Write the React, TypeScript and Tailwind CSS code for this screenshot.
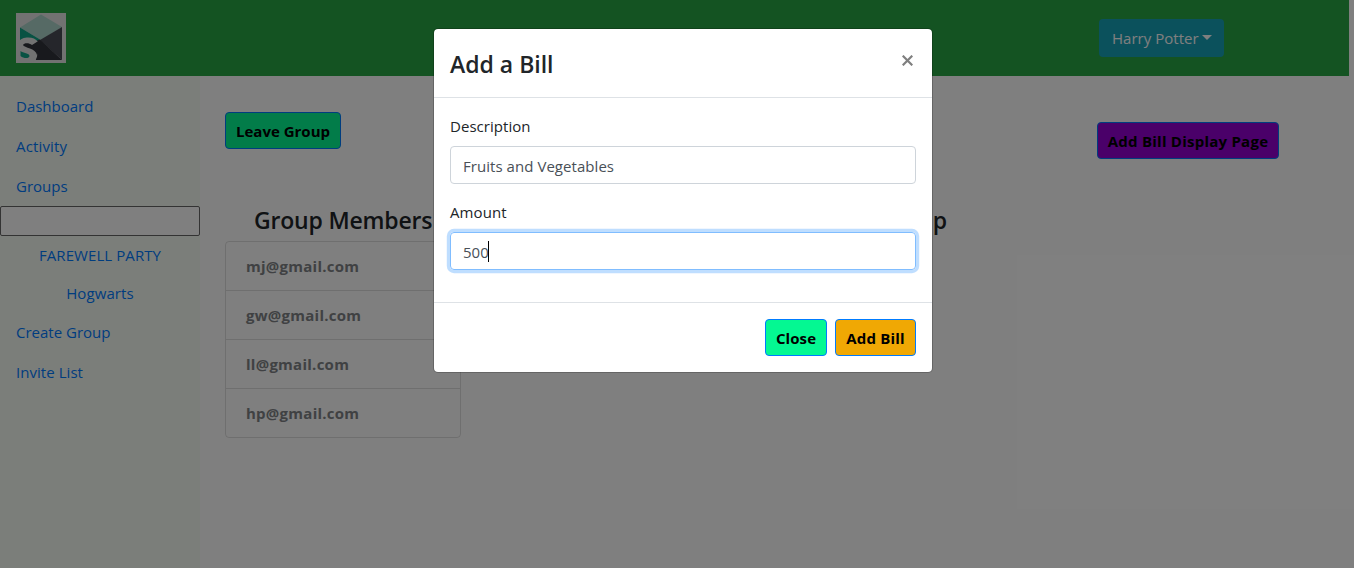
import React from 'react';

const members = ['mj@gmail.com', 'gw@gmail.com', 'll@gmail.com', 'hp@gmail.com'];

function Logo() {
  return (
    <svg width="50" height="50" viewBox="0 0 50 50" className="block">
      <rect width="50" height="50" fill="#e4e4e4" />
      <path d="M4 14.500 25 1.500 46 14 25 27Z" fill="#acd4ca" />
      <path d="M4 14.500 24 26.500 17 31 4 27Z" fill="#10a587" />
      <path d="M46 14V47L24 27Z" fill="#4a4c56" />
      <path d="M24 26.500 46 47H20L15 30Z" fill="#30323a" />
      <path d="M19 31C16 27 5.500 27 5.500 32.500C5.500 38 17.500 35.500 17.500 41.500C17.500 48 7 48 2 44" fill="none" stroke="#e4e4e4" strokeWidth="7.500" />
      <path d="M7 32C8 29.500 13 29.500 16 32L24 27V36L21 42C20 35 8 35 7 32Z" fill="#30323a" />
      <path d="M4.500 38C7 40 13.500 40 13.500 43C13.500 45.500 8 46 4.500 43Z" fill="#10a587" />
    </svg>
  );
}

function Navbar() {
  return (
    <header className="flex h-[76px] w-[1349px] items-center justify-between bg-[#28a745] pl-4 pr-[125px]">
      <Logo />
      <button className="flex h-[38px] w-[125px] items-center rounded bg-[#17a2b8] pb-px pl-[13px] text-white">
        <span className="tracking-[0.02px]">Harry Potter</span>
        <span className="mb-px ml-[3px] border-x-[5px] border-t-[5px] border-x-transparent border-t-white" />
      </button>
    </header>
  );
}

function Sidebar() {
  return (
    <nav className="flex w-[200px] flex-col bg-[#f7fcf4] pt-2.5 text-[#007bff]">
      <a className="h-10 px-4 pt-2">Dashboard</a>
      <a className="h-10 px-4 pt-2 tracking-[0.15px]">Activity</a>
      <a className="h-10 px-4 pt-2">Groups</a>
      <input className="h-[30px] w-[200px] rounded-[2px] border border-[#666] bg-white" />
      <a className="h-[38px] pt-[7px] text-center tracking-[0.08px]">FAREWELL PARTY</a>
      <a className="h-[38px] pt-[7px] text-center tracking-[0.1px]">Hogwarts</a>
      <a className="h-10 px-4 pt-2">Create Group</a>
      <a className="h-10 px-4 pt-2 tracking-[0.05px]">Invite List</a>
    </nav>
  );
}

function GroupPage() {
  return (
    <main className="flex-1 pl-[25px] pt-9">
      <div className="flex justify-between pr-[75px]">
        <button className="h-[37px] w-[116px] rounded border border-[#007bff] bg-[#04f892] pt-px font-bold text-black">Leave Group</button>
        <button className="mt-2.5 h-[37px] w-[182px] rounded border border-[#007bff] bg-[#9400d3] pt-px font-bold tracking-[0.24px] text-black">Add Bill Display Page</button>
      </div>
      <div className="mt-[42px] flex">
        <section className="w-[236px]">
          <h4 className="h-10 whitespace-nowrap pl-[29px] text-[23px] font-semibold leading-[38px] tracking-[-0.18px] text-[#212529]">Group Members</h4>
          <ul className="rounded border border-black/[0.125]">
            {members.map((email) => (
              <li key={email} className="h-[49px] border-b border-black/[0.125] pl-5 pt-3 font-bold tracking-[0.26px] text-[#808386] last:h-12 last:border-b-0">
                {email}
              </li>
            ))}
          </ul>
        </section>
        <h4 className="w-[486px] text-right text-[23px] font-semibold leading-[38px] text-[#212529]">Bills in Group</h4>
      </div>
    </main>
  );
}

function BillModal() {
  return (
    <div role="dialog" className="h-[345px] w-[500px] rounded-[5px] border border-black/20 bg-white bg-clip-padding text-[#212529]">
      <div className="flex h-[69px] justify-between border-b border-[#dee2e6] px-4 pt-[17px]">
        <h4 className="text-[23px] font-semibold leading-9">Add a Bill</h4>
        <svg width="11" height="11" viewBox="0 0 11 11" className="mr-[3px] mt-[9px]">
          <path d="M.7.7 10.300 10.300M10.300.7.7 10.300" stroke="#7f7f7f" strokeWidth="2.200" />
        </svg>
      </div>
      <div className="h-[204px] px-4 pt-4">
        <label className="block h-8 tracking-[0.04px]">Description</label>
        <div className="mb-4 flex h-[38px] items-center rounded border border-[#ced4da] pl-3 pt-px tracking-[0.05px] text-[#495057]">Fruits and Vegetables</div>
        <label className="block h-8 tracking-[0.1px]">Amount</label>
        <div className="flex h-[38px] items-center rounded border border-[#80bdff] pl-3 text-[#495057] shadow-[0_0_0_3.2px_rgba(0,123,255,0.25)]">
          <span className="pt-px">500</span>
          <span className="-ml-px h-[21px] w-px bg-black" />
        </div>
      </div>
      <div className="flex h-[70px] justify-end gap-2 border-t border-[#dee2e6] px-4 pt-4">
        <button className="h-[37px] w-[62px] rounded border border-[#007bff] bg-[#04f892] pt-px font-bold tracking-[0.1px] text-black">Close</button>
        <button className="h-[37px] w-[81px] rounded border border-[#007bff] bg-[#f0a804] pt-px font-bold tracking-[0.2px] text-black">Add Bill</button>
      </div>
    </div>
  );
}

export default function App() {
  return (
    <div className="relative h-[571px] w-[1354px] overflow-hidden bg-white font-['Open_Sans','Noto_Sans',sans-serif] text-[15px] leading-6">
      <div className="flex h-[568px] flex-col">
        <Navbar />
        <div className="flex flex-1">
          <Sidebar />
          <GroupPage />
        </div>
      </div>
      <div className="absolute left-0 top-0 flex h-[568px] w-full items-start bg-black/50 pl-[433px] pt-7">
        <BillModal />
      </div>
    </div>
  );
}
